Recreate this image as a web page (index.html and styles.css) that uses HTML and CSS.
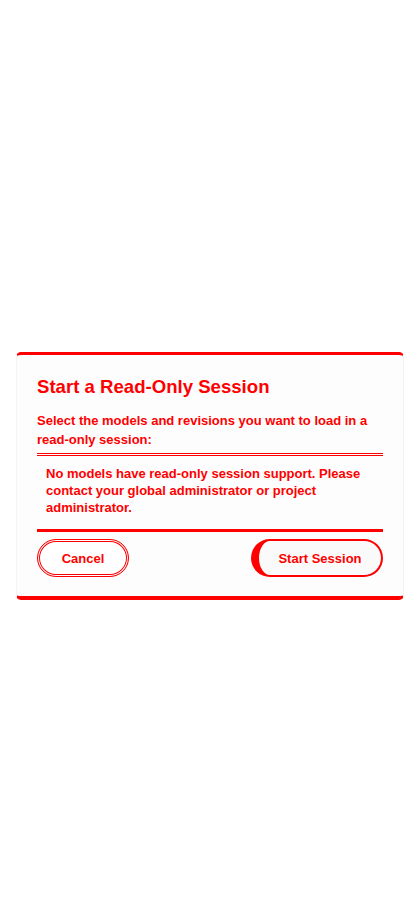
FILE: index.html
```html
<!DOCTYPE html>
<html>
<head>
<meta charset="utf-8">
<link rel="stylesheet" href="styles.css">
</head>
<body>
<div class="page">
  <div class="dialog">
    <h1 class="title">Start a Read-Only Session</h1>
    <p class="subtitle">Select the models and revisions you want to load in a read-only session:</p>
    <div class="notice">No models have read-only session support. Please contact your global administrator or project administrator.</div>
    <div class="actions">
      <button class="btn btn-cancel">Cancel</button>
      <button class="btn btn-start">Start Session</button>
    </div>
  </div>
</div>
</body>
</html>
```

FILE: styles.css
```css
html, body {
  margin: 0;
  padding: 0;
  background: #ffffff;
}
.page {
  width: 420px;
  height: 920px;
  padding-top: 352px;
  box-sizing: border-box;
  font-family: "Liberation Sans", Arial, sans-serif;
  color: #ff0000;
}
.dialog {
  margin: 0 16px;
  background: #fdfdfd;
  border-top: 3px solid #ff0000;
  border-bottom: 4px solid #ff0000;
  border-left: 1px solid #f3f3f3;
  border-right: 1px solid #f3f3f3;
  border-radius: 5px;
  padding: 21px 20px 19px 20px;
}
.title {
  margin: 0;
  font-size: 18.6px;
  line-height: 22px;
  font-weight: 700;
}
.subtitle {
  margin: 13px 0 0 0;
  font-size: 13px;
  line-height: 19px;
  font-weight: 700;
}
.notice {
  margin-top: 4px;
  border-top: 3px double #ff0000;
  border-bottom: 3px solid #ff0000;
  padding: 9px 10px 13px 9px;
  font-size: 13px;
  line-height: 17px;
  font-weight: 700;
}
.actions {
  display: flex;
  justify-content: space-between;
  margin-top: 7px;
}
.btn {
  font-family: "Liberation Sans", Arial, sans-serif;
  font-size: 13px;
  font-weight: 700;
  color: #ff0000;
  height: 38px;
  border-radius: 19px;
  cursor: pointer;
}
.btn-cancel {
  width: 92px;
  background: #ffffff;
  border: 1px solid #ff0000;
  box-shadow: inset 0 0 0 1px #ffffff, inset 0 0 0 2px #ff0000;
}
.btn-start {
  width: 132px;
  background: #fafafa;
  border: 2px solid #ff0000;
  border-left-width: 8px;
}
```
